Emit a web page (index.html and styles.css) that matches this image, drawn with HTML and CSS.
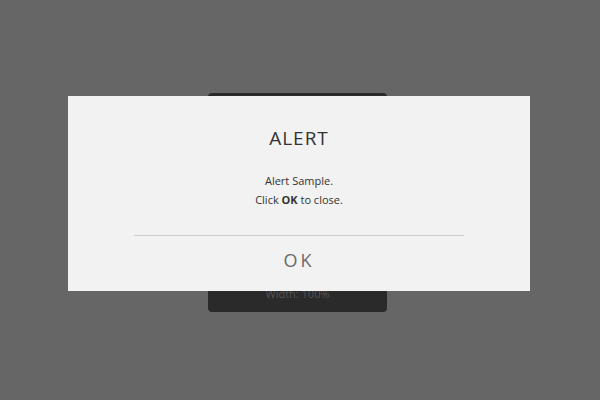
FILE: index.html
```html
<!DOCTYPE html>
<html>
<head>
<meta charset="utf-8">
<link rel="stylesheet" href="styles.css">
</head>
<body>
<div class="stage">
  <div class="panel">
    <div class="panel-label">Width: 100%</div>
  </div>
</div>
<div class="dialog">
  <div class="dialog-title">ALERT</div>
  <div class="dialog-body">
    <div>Alert Sample.</div>
    <div>Click <b>OK</b> to close.</div>
  </div>
  <div class="dialog-rule"></div>
  <div class="dialog-ok">OK</div>
</div>
</body>
</html>
```
FILE: styles.css
```css
html, body {
  margin: 0;
  padding: 0;
  background: #666666;
  font-family: "Open Sans", "DejaVu Sans", sans-serif;
}
.stage {
  padding-top: 93px;
  padding-left: 208px;
}
.panel {
  width: 179px;
  height: 219px;
  background: #2a2a2a;
  border-radius: 4px;
  display: flex;
  flex-direction: column;
  justify-content: flex-end;
  align-items: center;
  box-sizing: border-box;
  padding-bottom: 10px;
}
.panel-label {
  color: #555555;
  font-size: 11px;
  line-height: 16px;
}
.dialog {
  position: absolute;
  left: 68px;
  top: 96px;
  width: 462px;
  height: 195px;
  background: #f2f2f2;
  box-sizing: border-box;
  padding-top: 30px;
  display: flex;
  flex-direction: column;
  align-items: center;
}
.dialog-title {
  font-size: 19px;
  line-height: 24px;
  letter-spacing: 1px;
  color: #333333;
}
.dialog-body {
  margin-top: 21px;
  font-size: 11px;
  line-height: 19px;
  color: #333333;
  text-align: center;
}
.dialog-body b {
  font-weight: 700;
}
.dialog-rule {
  margin-top: 26px;
  width: 330px;
  height: 1px;
  background: #cccccc;
}
.dialog-ok {
  margin-top: 12px;
  font-size: 18px;
  line-height: 24px;
  letter-spacing: 3px;
  color: #6a6a6a;
}
```
